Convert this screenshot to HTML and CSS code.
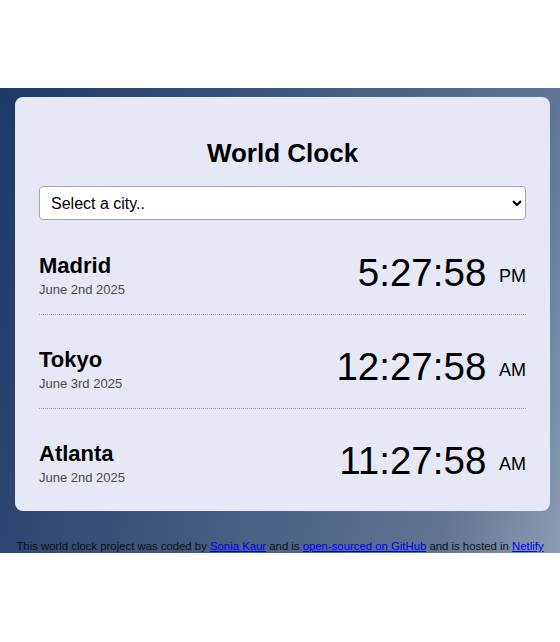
FILE: index.html
```html
<!DOCTYPE html>
<html lang="en">
<head>
<meta charset="utf-8">
<title>World Clock</title>
<link rel="stylesheet" href="styles.css">
</head>
<body>
<div class="page">
  <main class="card">
    <h1 class="title">World Clock</h1>
    <select class="city-select">
      <option>Select a city..</option>
    </select>
    <div class="cities">
      <div class="city">
        <div class="info">
          <h2 class="name">Madrid</h2>
          <div class="date">June 2nd 2025</div>
        </div>
        <div class="time">5:27:58 <small class="ampm">PM</small></div>
      </div>
      <div class="city">
        <div class="info">
          <h2 class="name">Tokyo</h2>
          <div class="date">June 3rd 2025</div>
        </div>
        <div class="time">12:27:58 <small class="ampm">AM</small></div>
      </div>
      <div class="city">
        <div class="info">
          <h2 class="name">Atlanta</h2>
          <div class="date">June 2nd 2025</div>
        </div>
        <div class="time">11:27:58 <small class="ampm">AM</small></div>
      </div>
    </div>
  </main>
  <footer class="footer">This world clock project was coded by <a href="#">Sonia Kaur</a> and is <a href="#">open-sourced on GitHub</a> and is hosted in <a href="#">Netlify</a></footer>
</div>
</body>
</html>
```
FILE: styles.css
```css
html, body {
  margin: 0;
  padding: 0;
  background: #fff;
  font-family: "Liberation Sans", Arial, sans-serif;
}
.page {
  margin-top: 88px;
  padding: 9px 0 0;
  background: linear-gradient(105deg, #1c3a68 0%, #5f7593 82%, #8c9cb3 100%);
}
.card {
  margin: 0 10px 0 15px;
  background: #e6e8f5;
  border-radius: 8px;
  padding: 41px 24px 9px;
}
.title {
  margin: 0 0 18px;
  text-align: center;
  font-size: 26px;
  line-height: 30px;
  font-weight: bold;
  color: #000;
}
.city-select {
  display: block;
  width: 100%;
  height: 34px;
  margin: 0 0 1px;
  padding: 0 7px;
  font-family: "Liberation Sans", Arial, sans-serif;
  font-size: 16px;
  color: #000;
  background: #fff;
  border: 1px solid #a5a7ae;
  border-radius: 4px;
}
.city {
  display: flex;
  justify-content: space-between;
  align-items: center;
  padding: 32px 0 17px;
  border-bottom: 1px dotted #9a9ca6;
}
.city:last-child {
  border-bottom: none;
}
.name {
  margin: 0 0 4px;
  font-size: 22px;
  line-height: 25px;
  font-weight: bold;
  color: #000;
}
.date {
  font-size: 13px;
  line-height: 15px;
  color: #4a4a4a;
}
.time {
  margin-bottom: 4px;
  font-size: 38.5px;
  line-height: 36px;
  color: #000;
  white-space: nowrap;
}
.ampm {
  margin-left: 2px;
  font-size: 18px;
  line-height: 1;
  vertical-align: 4px;
}
.footer {
  padding: 28px 0 0;
  text-align: center;
  font-size: 11.35px;
  line-height: 14px;
  color: #111;
}
.footer a {
  color: #0000ee;
}
```
